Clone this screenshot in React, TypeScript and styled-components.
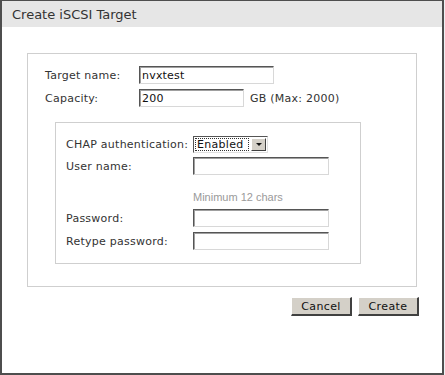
import React from "react";
import styled, { createGlobalStyle } from "styled-components";

const GlobalStyle = createGlobalStyle`
  html, body {
    margin: 0;
    padding: 0;
    background: #eef0f3;
  }
`;

const Dialog = styled.div`
  box-sizing: border-box;
  width: 444px;
  height: 375px;
  background: #ffffff;
  border: 2px solid #4e4e4e;
  border-top-width: 1px;
  font-family: "DejaVu Sans", Verdana, sans-serif;
  font-size: 11px;
  letter-spacing: 0.25px;
  color: #333;
  display: flex;
  flex-direction: column;
`;

const TitleBar = styled.div`
  height: 26px;
  background: #e6e6e6;
  display: flex;
  align-items: center;
  padding-left: 10px;
  font-size: 13px;
  letter-spacing: 0;
  color: #333;
`;

const Body = styled.div`
  padding: 26px 25px 0 25px;
  display: flex;
  flex-direction: column;
`;

const Box = styled.div<{ $w: number; $h: number; $ml?: number; $mt?: number; $pt: number; $pl: number }>`
  box-sizing: border-box;
  width: ${(p) => p.$w}px;
  height: ${(p) => p.$h}px;
  margin-left: ${(p) => p.$ml ?? 0}px;
  margin-top: ${(p) => p.$mt ?? 0}px;
  border: 1px solid #cfcfcf;
  padding: ${(p) => p.$pt}px 0 0 ${(p) => p.$pl}px;
  display: flex;
  flex-direction: column;
`;

const Row = styled.div<{ $label: number; $gap?: number }>`
  display: grid;
  grid-template-columns: ${(p) => p.$label}px auto auto;
  justify-content: start;
  align-items: center;
  column-gap: 6px;
  margin-bottom: ${(p) => p.$gap ?? 5}px;
`;

const Label = styled.span`
  white-space: nowrap;
`;

const Input = styled.div<{ $w: number }>`
  box-sizing: border-box;
  width: ${(p) => p.$w}px;
  height: 18px;
  border-top: 1px solid #555;
  border-left: 1px solid #555;
  border-right: 1px solid #d8d8d8;
  border-bottom: 1px solid #d8d8d8;
  box-shadow: inset 1px 1px 0 #a0a0a0;
  padding: 0 2px;
  display: flex;
  align-items: center;
  font-size: 11px;
  letter-spacing: 0.2px;
  color: #111;
`;

const Select = styled.div`
  box-sizing: border-box;
  width: 75px;
  height: 17px;
  border-top: 1px solid #555;
  border-left: 1px solid #555;
  border-right: 1px solid #e0e0e0;
  border-bottom: 1px solid #e0e0e0;
  display: flex;
  align-items: stretch;
  padding: 1px;
  font-size: 11px;
  letter-spacing: 0.3px;
`;

const SelectValue = styled.span`
  flex: 1;
  outline: 1px dotted #333;
  outline-offset: -1px;
  display: flex;
  align-items: center;
  padding-left: 2px;
  color: #111;
`;

const SelectArrow = styled.span`
  width: 13px;
  margin-left: 2px;
  background: #d4d0c8;
  border-top: 1px solid #fff;
  border-left: 1px solid #fff;
  border-right: 1px solid #404040;
  border-bottom: 1px solid #404040;
  display: flex;
  align-items: center;
  justify-content: center;
  &::after {
    content: "";
    border-left: 3px solid transparent;
    border-right: 3px solid transparent;
    border-top: 3px solid #111;
  }
`;

const Hint = styled.div`
  margin: 16px 0 6px 127px;
  font-family: "Liberation Sans", Arial, sans-serif;
  font-size: 11px;
  letter-spacing: 0;
  color: #9a9a9a;
`;

const Note = styled.span`
  font-size: 11px;
`;

const Actions = styled.div`
  display: flex;
  justify-content: flex-end;
  gap: 6px;
  margin-top: 10px;
  margin-right: -2px;
`;

const Button = styled.button`
  box-sizing: border-box;
  width: 61px;
  height: 19px;
  padding: 0;
  background: #d4d0c8;
  border-top: 1px solid #fff;
  border-left: 1px solid #fff;
  border-right: 2px solid #404040;
  border-bottom: 2px solid #404040;
  font-family: "DejaVu Sans", Verdana, sans-serif;
  font-size: 11px;
  color: #111;
  letter-spacing: 0.4px;
`;

export default function App() {
  return (
    <>
      <GlobalStyle />
      <Dialog>
        <TitleBar>Create iSCSI Target</TitleBar>
        <Body>
          <Box $w={390} $h={234} $pt={12} $pl={17}>
            <Row $label={88}>
              <Label>Target name:</Label>
              <Input $w={135}>nvxtest</Input>
            </Row>
            <Row $label={88}>
              <Label>Capacity:</Label>
              <Input $w={105}>200</Input>
              <Note>GB (Max: 2000)</Note>
            </Row>
            <Box $w={306} $h={142} $ml={10} $mt={10} $pt={13} $pl={10}>
              <Row $label={121} $gap={4}>
                <Label>CHAP authentication:</Label>
                <Select>
                  <SelectValue>Enabled</SelectValue>
                  <SelectArrow />
                </Select>
              </Row>
              <Row $label={121} $gap={0}>
                <Label>User name:</Label>
                <Input $w={136} />
              </Row>
              <Hint>Minimum 12 chars</Hint>
              <Row $label={121}>
                <Label>Password:</Label>
                <Input $w={136} />
              </Row>
              <Row $label={121}>
                <Label>Retype password:</Label>
                <Input $w={136} />
              </Row>
            </Box>
          </Box>
          <Actions>
            <Button>Cancel</Button>
            <Button>Create</Button>
          </Actions>
        </Body>
      </Dialog>
    </>
  );
}
